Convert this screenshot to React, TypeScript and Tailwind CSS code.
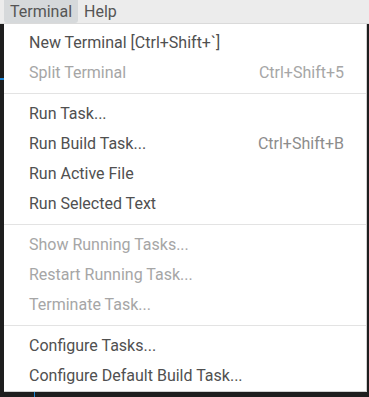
import React from "react";

type Item = { label?: string; shortcut?: string; disabled?: boolean; sep?: boolean };

const items: Item[] = [
  { label: "New Terminal [Ctrl+Shift+`]" },
  { label: "Split Terminal", shortcut: "Ctrl+Shift+5", disabled: true },
  { sep: true },
  { label: "Run Task..." },
  { label: "Run Build Task...", shortcut: "Ctrl+Shift+B" },
  { label: "Run Active File" },
  { label: "Run Selected Text" },
  { sep: true },
  { label: "Show Running Tasks...", disabled: true },
  { label: "Restart Running Task...", disabled: true },
  { label: "Terminate Task...", disabled: true },
  { sep: true },
  { label: "Configure Tasks..." },
  { label: "Configure Default Build Task..." },
];

export default function App() {
  return (
    <div
      className="relative w-[369px] h-[397px] overflow-hidden bg-[#1e1e1e]"
      style={{ fontFamily: "Roboto, 'Noto Sans', sans-serif" }}
    >
      <div className="flex h-[24px] items-stretch border-b border-[#dadada] bg-[#ececec] pl-[4px] text-[16px] text-[#555555]">
        <div className="flex items-center rounded-b-[3px] bg-[#d6d9db] px-[6px] leading-none">Terminal</div>
        <div className="flex items-center px-[6px] leading-none">Help</div>
      </div>
      <div className="absolute left-0 top-[78px] h-[2px] w-[4px] bg-[#1a85d6]" />
      <div className="absolute bottom-0 left-[34px] h-[5px] w-[1px] bg-[#1a85d6]" />
      <div className="absolute left-[4px] top-[24px] w-[363px] border-b border-r border-[#d0d0d0] bg-white pb-0 pt-[4px] text-[16px]">
        {items.map((it, i) =>
          it.sep ? (
            <div key={i} className="flex h-[11px] items-center">
              <div className="h-px w-full bg-[#e3e3e3]" />
            </div>
          ) : (
            <div
              key={i}
              className={`flex h-[30px] items-center justify-between pl-[25px] pr-[22px] leading-none ${
                it.disabled ? "text-[#a6a6a6]" : "text-[#505050]"
              }`}
            >
              <span>{it.label}</span>
              {it.shortcut && (
                <span className={it.disabled ? "text-[#a6a6a6]" : "text-[#8c8c8c]"}>{it.shortcut}</span>
              )}
            </div>
          )
        )}
      </div>
    </div>
  );
}
